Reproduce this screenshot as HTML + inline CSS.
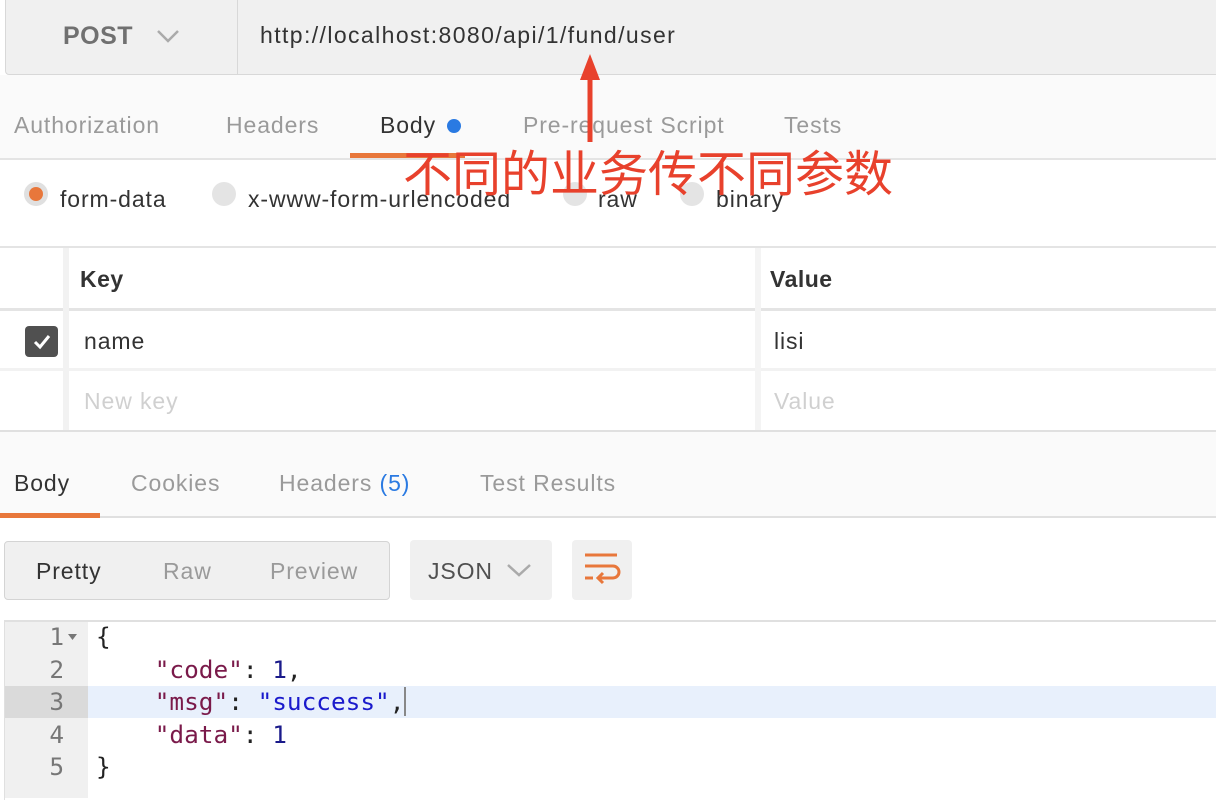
<!DOCTYPE html>
<html><head><meta charset="utf-8"><style>
*{margin:0;padding:0;box-sizing:border-box}
body{width:1216px;height:798px;overflow:hidden;background:#fff;font-family:"Liberation Sans","Noto Sans CJK SC",sans-serif;position:relative;color:#505050}
.a{position:absolute;white-space:nowrap}
.t{font-size:23px;color:#9a9a9a;letter-spacing:0.9px}
.mono{font-family:"DejaVu Sans Mono","Liberation Mono",monospace;font-size:24.4px}
</style></head><body>
<div class="a" style="left:5px;top:-4px;width:1220px;height:79px;background:#f0f0f0;border:1px solid #d8d8d8;border-radius:4px"></div>
<div class="a" style="left:237px;top:0;width:1px;height:74px;background:#d8d8d8"></div>
<div class="a" style="left:63px;top:22px;font-size:25px;color:#707070;font-weight:bold;letter-spacing:0.5px">POST</div>
<svg class="a" style="left:156px;top:28px" width="24" height="16"><path d="M2 3 L12 13 L22 3" stroke="#aaa" stroke-width="2.5" fill="none"/></svg>
<div class="a" style="left:260px;top:22px;font-size:23px;color:#333;letter-spacing:1.4px">http://localhost:8080/api/1/fund/user</div>
<div class="a" style="left:0;top:75px;width:1216px;height:85px;background:#fafafa;border-bottom:2px solid #e4e4e4"></div>
<div class="a t" style="left:14px;top:112px">Authorization</div>
<div class="a t" style="left:226px;top:112px">Headers</div>
<div class="a t" style="left:380px;top:112px;color:#333">Body</div>
<div class="a" style="left:447px;top:119px;width:14px;height:14px;border-radius:50%;background:#2a7ae2"></div>
<div class="a t" style="left:523px;top:112px">Pre-request Script</div>
<div class="a t" style="left:784px;top:112px">Tests</div>
<div class="a" style="left:350px;top:153px;width:115px;height:5px;background:#e8773b"></div>
<div class="a" style="left:24px;top:182px;width:24px;height:24px;border-radius:50%;background:#e0e0e0"></div>
<div class="a" style="left:29px;top:187px;width:14px;height:14px;border-radius:50%;background:#e8773b"></div>
<div class="a t" style="left:60px;top:186px;color:#333">form-data</div>
<div class="a" style="left:212px;top:182px;width:24px;height:24px;border-radius:50%;background:#e4e4e4"></div>
<div class="a t" style="left:248px;top:186px;color:#333">x-www-form-urlencoded</div>
<div class="a" style="left:563px;top:182px;width:24px;height:24px;border-radius:50%;background:#e4e4e4"></div>
<div class="a t" style="left:598px;top:186px;color:#333">raw</div>
<div class="a" style="left:680px;top:182px;width:24px;height:24px;border-radius:50%;background:#e4e4e4"></div>
<div class="a t" style="left:716px;top:186px;color:#333">binary</div>
<div class="a" style="left:0;top:246px;width:1216px;height:2px;background:#e4e4e4"></div>
<div class="a" style="left:0;top:308px;width:1216px;height:3px;background:#e4e4e4"></div>
<div class="a" style="left:0;top:368px;width:1216px;height:3px;background:#f2f2f2"></div>
<div class="a" style="left:0;top:430px;width:1216px;height:2px;background:#e0e0e0"></div>
<div class="a" style="left:63px;top:248px;width:6px;height:182px;background:#f2f2f2"></div>
<div class="a" style="left:755px;top:248px;width:6px;height:182px;background:#f4f4f4"></div>
<div class="a" style="left:80px;top:266px;font-size:23px;font-weight:bold;color:#333;letter-spacing:0.5px">Key</div>
<div class="a" style="left:770px;top:266px;font-size:23px;font-weight:bold;color:#333;letter-spacing:0.5px">Value</div>
<div class="a" style="left:25px;top:326px;width:33px;height:31px;border-radius:4px;background:#505050"></div>
<svg class="a" style="left:25px;top:326px" width="33" height="31"><path d="M10 16 L15 21 L24 10" stroke="#fff" stroke-width="3" fill="none"/></svg>
<div class="a t" style="left:84px;top:328px;color:#333">name</div>
<div class="a t" style="left:774px;top:328px;color:#333">lisi</div>
<div class="a t" style="left:84px;top:388px;color:#d0d0d0">New key</div>
<div class="a t" style="left:774px;top:388px;color:#d0d0d0">Value</div>
<div class="a" style="left:0;top:432px;width:1216px;height:86px;background:#fafafa;border-bottom:2px solid #e0e0e0"></div>
<div class="a t" style="left:14px;top:470px;color:#333">Body</div>
<div class="a t" style="left:131px;top:470px">Cookies</div>
<div class="a t" style="left:279px;top:470px">Headers <span style="color:#2a7ae2">(5)</span></div>
<div class="a t" style="left:480px;top:470px">Test Results</div>
<div class="a" style="left:0;top:513px;width:100px;height:5px;background:#e8773b"></div>
<div class="a" style="left:4px;top:541px;width:386px;height:59px;background:#f0f0f0;border:1px solid #d4d4d4;border-radius:4px"></div>
<div class="a t" style="left:36px;top:558px;color:#333">Pretty</div>
<div class="a t" style="left:163px;top:558px">Raw</div>
<div class="a t" style="left:270px;top:558px">Preview</div>
<div class="a" style="left:410px;top:540px;width:142px;height:60px;background:#f0f0f0;border-radius:4px"></div>
<div class="a t" style="left:428px;top:558px;color:#505050">JSON</div>
<svg class="a" style="left:506px;top:562px" width="26" height="16"><path d="M2 3 L13 13 L24 3" stroke="#aaa" stroke-width="2.5" fill="none"/></svg>
<div class="a" style="left:572px;top:540px;width:60px;height:60px;background:#f0f0f0;border-radius:4px"></div>
<svg class="a" style="left:583px;top:550px" width="40" height="40"><g stroke="#e8773b" stroke-width="3" fill="none"><path d="M2 5 H34"/><path d="M2 16 H30 a6 6 0 0 1 0 12 H16"/><path d="M20 23 L15 28 L20 33"/><path d="M2 28 H10"/></g></svg>
<div class="a" style="left:4px;top:620px;width:1216px;height:180px;border-top:2px solid #e0e0e0;border-left:1px solid #e0e0e0"></div>
<div class="a" style="left:5px;top:622px;width:83px;height:176px;background:#f0f0f0"></div>
<div class="a" style="left:5px;top:686px;width:83px;height:32px;background:#dadada"></div>
<div class="a" style="left:88px;top:686px;width:1128px;height:32px;background:#e8f0fc"></div>
<div class="a mono" style="left:38px;top:621px;line-height:32.5px;color:#777;text-align:right;width:26px">1<br>2<br>3<br>4<br>5</div>
<svg class="a" style="left:68px;top:634px" width="10" height="8"><path d="M0 0 H9 L4.5 6Z" fill="#777"/></svg>
<div class="a mono" style="left:96px;top:621px;line-height:32.5px;color:#222">{<br>&nbsp;&nbsp;&nbsp;&nbsp;<span style="color:#7a1a4a">"code"</span>: <span style="color:#1a1a8a">1</span>,<br>&nbsp;&nbsp;&nbsp;&nbsp;<span style="color:#7a1a4a">"msg"</span>: <span style="color:#1a1acc">"success"</span>,<span style="border-left:2px solid #888"></span><br>&nbsp;&nbsp;&nbsp;&nbsp;<span style="color:#7a1a4a">"data"</span>: <span style="color:#1a1a8a">1</span><br>}</div>
<svg class="a" style="left:575px;top:50px" width="32" height="95"><path d="M15 92 L15 25" stroke="#e8412c" stroke-width="5"/><path d="M5 30 L15 4 L25 30 Z" fill="#e8412c"/></svg>
<div class="a" style="left:403px;top:140px;font-size:49px;color:#e8412c;font-family:'Noto Sans CJK SC',sans-serif;line-height:62px">不同的业务传不同参数</div>
</body></html>
